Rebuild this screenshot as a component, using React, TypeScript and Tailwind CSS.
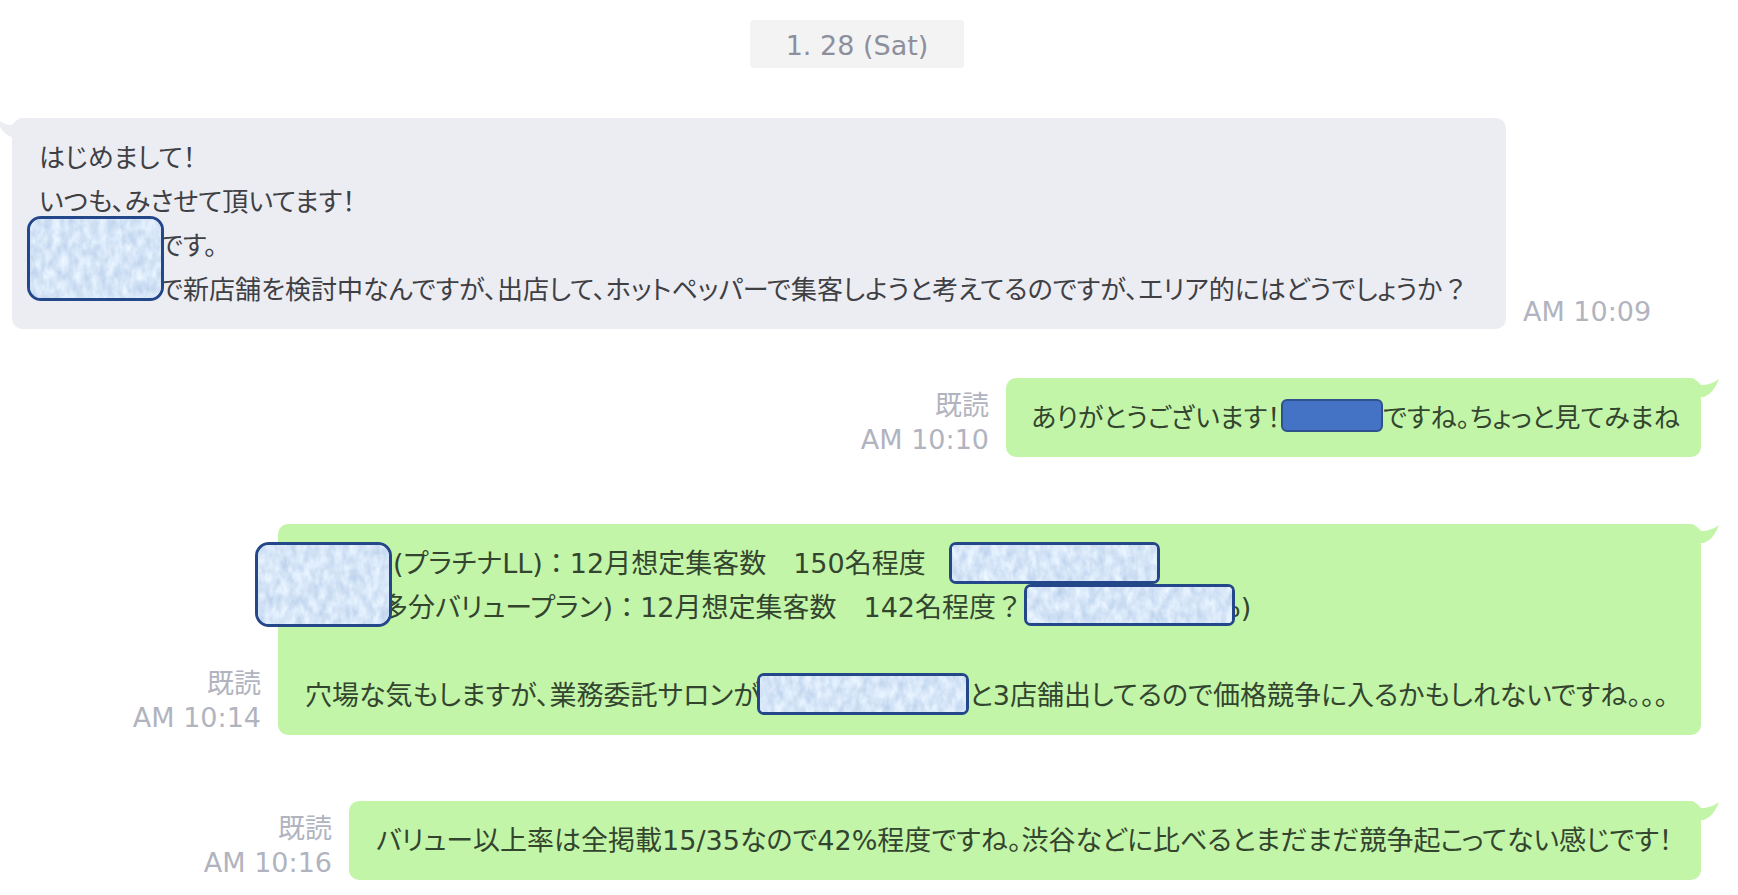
import type { ReactNode } from "react";

const bodyFont =
  "font-['DejaVu_Sans','Noto_Sans_CJK_JP',sans-serif] [font-feature-settings:'palt']";

function Texture({ seed }: { seed: number }) {
  const id = `paper-${seed}`;
  return (
    <svg className="block size-full" aria-hidden="true">
      <filter id={id} x="0" y="0" width="100%" height="100%" colorInterpolationFilters="sRGB">
        <feTurbulence type="fractalNoise" baseFrequency="0.13 0.08" numOctaves="3" seed={seed} />
        <feColorMatrix
          values="0.26 0 0 0 0.71
                  0.20 0 0 0 0.80
                  0.12 0 0 0 0.91
                  0 0 0 0 1"
        />
      </filter>
      <rect width="100%" height="100%" filter={`url(#${id})`} />
    </svg>
  );
}

function Cover({ className, seed }: { className: string; seed: number }) {
  return (
    <span
      className={`absolute overflow-hidden border-3 border-[#24478a] bg-[#d5e5f9] ${className}`}
    >
      <Texture seed={seed} />
    </span>
  );
}

function Wide({ children }: { children: ReactNode }) {
  return <span className="[font-feature-settings:normal]">{children}</span>;
}

function Meta({ read, time }: { read?: boolean; time: string }) {
  return (
    <div className="shrink-0 text-right text-[27px] leading-[34px] text-[#b1b4bf]">
      {read && <p>既読</p>}
      <time>{time}</time>
    </div>
  );
}

function Line({ children }: { children?: ReactNode }) {
  return <p className="flex h-11 items-center whitespace-pre">{children}</p>;
}

function Sent({ time, className, children }: { time: string; className: string; children: ReactNode }) {
  return (
    <article className="flex items-end justify-end gap-[17px] pr-[37px]">
      <Meta read time={time} />
      <div
        className={`relative rounded-[10px] bg-[#c3f5a9] pt-[18px] pb-[17px] text-[#34452f] ${className}`}
      >
        <svg
          className="absolute top-0 -right-[18px] h-[20px] w-[30px]"
          viewBox="0 0 30 20"
          aria-hidden="true"
        >
          <path d="M4 0H12V7Z" fill="#fff" />
          <path d="M3 0Q8 2 12 7Q22 7 30 1Q25 15 15 19H11L2 10Z" fill="#c3f5a9" />
        </svg>
        {children}
      </div>
    </article>
  );
}

export default function App() {
  return (
    <main className={`min-h-screen overflow-hidden bg-white pt-5 pb-3 ${bodyFont}`}>
      <div className="flex justify-center pr-6">
        <time className="rounded bg-[#f3f3f3] px-9 pt-1 text-[27px] leading-[44px] text-[#8d909c]">
          1. 28 (Sat)
        </time>
      </div>

      <section className="pt-[50px]">
        <article className="flex items-end gap-[17px] pl-3">
          <div className="relative w-[1494px] rounded-[10px] bg-[#ecedf3] pt-[18px] pb-[17px] pl-[27px] text-[26px] text-[#404044]">
            <svg
              className="absolute top-0 -left-3 h-[20px] w-[24px]"
              viewBox="0 0 24 20"
              aria-hidden="true"
            >
              <path d="M12 0H20L12 7Z" fill="#fff" />
              <path d="M21 0Q16 2 12 7Q5 7 0 3V9Q6 18 12 19L22 10Z" fill="#ecedf3" />
            </svg>
            <Line>はじめまして！</Line>
            <Line>いつも、みさせて頂いてます！</Line>
            <Line>
              <span className="pl-[120px]">です。</span>
            </Line>
            <Line>
              <span className="pl-[120px]">
                で新店舗を検討中なんですが、出店して、ホットペッパーで集客しようと考えてるのですが、エリア的にはどうでしょうか
                <Wide>？</Wide>
              </span>
            </Line>
            <Cover seed={4} className="top-[98px] left-[15px] h-[85px] w-[137px] rounded-[14px]" />
          </div>
          <Meta time="AM 10:09" />
        </article>
      </section>

      <section className="pt-[49px]">
        <Sent time="AM 10:10" className="w-[695px] pl-[25px] text-[26px]">
          <Line>
            <span className="w-[250px]">ありがとうございます！</span>
            <span className="mb-1.5 h-[33px] w-[102px] shrink-0 rounded-[6px] border-2 border-[#2f528f] bg-[#4472c4]" />
            <span>ですね。ちょっと見てみまね</span>
          </Line>
        </Sent>
      </section>

      <section className="pt-[67px]">
        <Sent time="AM 10:14" className="w-[1423px] pl-[27px] text-[27px]">
          <Line>
            <span className="pl-[88px]">
              (プラチナLL)<Wide>：</Wide>12月想定集客数　150名程度
            </span>
          </Line>
          <Line>
            <span className="w-[930px] pl-[76px]">
              多分バリュープラン)<Wide>：</Wide>12月想定集客数　142名程度<Wide>？</Wide>
            </span>
            <span className="-ml-5">%)</span>
          </Line>
          <Line />
          <Line>
            <span className="w-[664px]">穴場な気もしますが、業務委託サロンが</span>
            <span>と3店舗出してるので価格競争に入るかもしれないですね。。。</span>
          </Line>
          <Cover seed={9} className="top-[18px] -left-[23px] h-[85px] w-[137px] rounded-[14px]" />
          <Cover seed={12} className="top-[18px] left-[671px] h-[42px] w-[211px] rounded-[7px]" />
          <Cover seed={15} className="top-[60px] left-[746px] h-[42px] w-[211px] rounded-[7px]" />
          <Cover seed={21} className="top-[149px] left-[479px] h-[42px] w-[212px] rounded-[7px]" />
        </Sent>
      </section>

      <section className="pt-[66px]">
        <Sent time="AM 10:16" className="w-[1352px] pl-[27px] text-[27px]">
          <Line>
            バリュー以上率は全掲載15/35なので42%程度ですね。渋谷などに比べるとまだまだ競争起こってない感じです！
          </Line>
        </Sent>
      </section>
    </main>
  );
}
